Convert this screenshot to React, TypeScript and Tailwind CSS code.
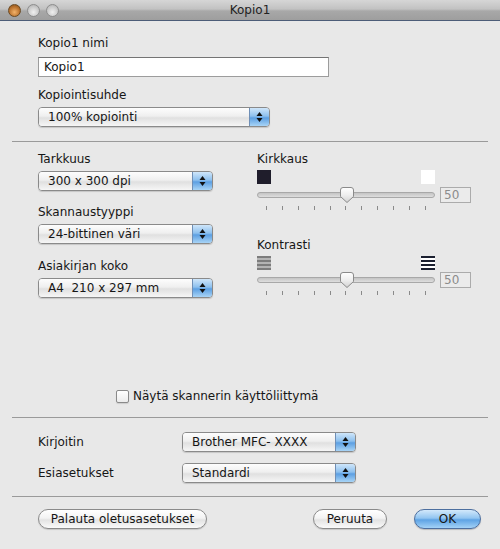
import type { ReactNode } from 'react';

const font = { fontFamily: '"DejaVu Sans", "Liberation Sans", sans-serif' };

function TrafficLight({ active }: { active?: boolean }) {
    return (
        <span
            className={
                active
                    ? 'h-[13px] w-[13px] rounded-full border border-[#6b4a22] bg-[radial-gradient(circle_at_50%_65%,#f3b36a,#b8702c_60%,#7a4a1c)]'
                    : 'h-[13px] w-[13px] rounded-full border border-[#8d8d8d] bg-[radial-gradient(circle_at_50%_65%,#f0f0f0,#c8c8c8_60%,#a9a9a9)]'
            }
        />
    );
}

function Label({ children, className = '' }: { children: ReactNode; className?: string }) {
    return <div className={`h-[16px] leading-[16px] ${className}`}>{children}</div>;
}

function Stepper() {
    return (
        <svg width="7" height="12" viewBox="0 0 7 12">
            <path d="M3.5 1 L6.5 5 L0.5 5 Z" fill="#111" />
            <path d="M0.5 7 L6.5 7 L3.5 11 Z" fill="#111" />
        </svg>
    );
}

function PopUp({ value, width, className = '' }: { value: string; width: string; className?: string }) {
    return (
        <div
            className={`flex h-[20px] overflow-hidden rounded-[4px] border border-[#8a8a8a] shadow-[0_1px_1px_rgba(0,0,0,0.15)] ${width} ${className}`}
        >
            <div className="flex flex-1 items-center whitespace-pre bg-[linear-gradient(#fdfdfd,#efefef_45%,#e0e0e0_55%,#f6f6f6)] pl-[9px] leading-none">
                {value}
            </div>
            <div className="flex w-[20px] items-center justify-center border-l border-[#6f8fb6] bg-[linear-gradient(#cfe6fa,#8dc0ee_45%,#5c9fe2_55%,#a8d4f6)]">
                <Stepper />
            </div>
        </div>
    );
}

function Ticks() {
    return (
        <div className="mt-[3px] flex h-[4px] w-[178px] justify-between px-[9px]">
            {Array.from({ length: 11 }).map((_, i) => (
                <span key={i} className="h-[4px] w-[1px] bg-[#8a8a8a]" />
            ))}
        </div>
    );
}

function Thumb() {
    return (
        <svg width="16" height="18" viewBox="0 0 16 18">
            <defs>
                <linearGradient id="thumb" x1="0" y1="0" x2="0" y2="1">
                    <stop offset="0" stopColor="#ffffff" />
                    <stop offset="0.5" stopColor="#eeeeee" />
                    <stop offset="1" stopColor="#d2d2d2" />
                </linearGradient>
            </defs>
            <path
                d="M1.5 4 Q1.5 1.5 4 1.5 H12 Q14.5 1.5 14.5 4 V10.5 L8 16.5 L1.5 10.5 Z"
                fill="url(#thumb)"
                stroke="#8a8a8a"
            />
        </svg>
    );
}

function Slider({ className = '' }: { className?: string }) {
    return (
        <div className={`flex h-[16px] items-center ${className}`}>
            <div className="relative h-[6px] w-[178px] rounded-full border border-[#a8a8a8] bg-[linear-gradient(#c4c4c4,#dedede)]">
                <div className="absolute left-[81px] top-[-7px]">
                    <Thumb />
                </div>
            </div>
            <div className="ml-[5px] flex h-[16px] w-[31px] items-center border border-[#ababab] bg-[#ebebeb] pl-[3px] text-[#8c8c8c] leading-none">
                50
            </div>
        </div>
    );
}

function Divider({ className = '' }: { className?: string }) {
    return <div className={`mx-[12px] h-[1px] bg-[#9a9a9a] ${className}`} />;
}

function Button({ children, width, primary }: { children: ReactNode; width: string; primary?: boolean }) {
    return (
        <button
            className={
                primary
                    ? `flex h-[20px] ${width} items-center justify-center rounded-full border border-[#4d6f9f] bg-[linear-gradient(#d3e9fb,#92c5f1_45%,#5ea3e4_55%,#a3d2f7)] leading-none shadow-[0_1px_1px_rgba(0,0,0,0.2)]`
                    : `flex h-[20px] ${width} items-center justify-center rounded-full border border-[#8a8a8a] bg-[linear-gradient(#ffffff,#f3f3f3_45%,#e3e3e3_55%,#fafafa)] leading-none shadow-[0_1px_1px_rgba(0,0,0,0.15)]`
            }
        >
            {children}
        </button>
    );
}

function BlackSquare() {
    return <span className="h-[14px] w-[14px] bg-[#1f1d2b]" />;
}

function WhiteSquare() {
    return <span className="h-[14px] w-[14px] bg-white" />;
}

function LowContrastIcon() {
    return (
        <svg width="14" height="14" viewBox="0 0 14 14">
            <rect width="14" height="14" fill="#b4b4b4" />
            <rect y="0" width="14" height="2" fill="#7c7c7c" />
            <rect y="4" width="14" height="2" fill="#7c7c7c" />
            <rect y="8" width="14" height="2" fill="#7c7c7c" />
            <rect y="12" width="14" height="2" fill="#7c7c7c" />
        </svg>
    );
}

function HighContrastIcon() {
    return (
        <svg width="14" height="14" viewBox="0 0 14 14">
            <rect width="14" height="14" fill="#ffffff" />
            <rect y="0" width="14" height="2" fill="#1b2030" />
            <rect y="4" width="14" height="2" fill="#1b2030" />
            <rect y="8" width="14" height="2" fill="#1b2030" />
            <rect y="12" width="14" height="2" fill="#1b2030" />
        </svg>
    );
}

export default function App() {
    return (
        <div
            className="flex h-[549px] w-[500px] flex-col bg-[#e8e8e8] text-[12px] text-[#161616]"
            style={font}
        >
            <div className="grid h-[21px] grid-cols-[1fr_auto_1fr] items-center border-b border-[#4d5d78] bg-[linear-gradient(#d6d6d6,#c2c2c2_45%,#a8a8a8_55%,#9e9e9e)]">
                <div className="flex items-center gap-[6px] pl-[8px]">
                    <TrafficLight active />
                    <TrafficLight />
                    <TrafficLight />
                </div>
                <div className="leading-none text-[#222]">Kopio1</div>
                <div />
            </div>

            <div className="flex flex-col px-[38px]">
                <Label className="mt-[14px]">Kopio1 nimi</Label>
                <div className="mt-[6px] flex h-[20px] w-[291px] items-center border border-[#9c9c9c] border-t-[#747474] bg-white pl-[5px] leading-none">
                    Kopio1
                </div>
                <Label className="mt-[10px]">Kopiointisuhde</Label>
                <PopUp className="mt-[4px]" width="w-[232px]" value="100% kopiointi" />
            </div>

            <Divider className="mt-[14px]" />

            <div className="flex pl-[38px]">
                <div className="flex w-[175px] flex-col">
                    <Label className="mt-[9px]">Tarkkuus</Label>
                    <PopUp className="mt-[4px]" width="w-[175px]" value="300 x 300 dpi" />
                    <Label className="mt-[13px]">Skannaustyyppi</Label>
                    <PopUp className="mt-[4px]" width="w-[175px]" value="24-bittinen väri" />
                    <Label className="mt-[14px]">Asiakirjan koko</Label>
                    <PopUp className="mt-[4px]" width="w-[175px]" value="A4  210 x 297 mm" />
                </div>

                <div className="ml-[44px] flex flex-col">
                    <Label className="mt-[9px]">Kirkkaus</Label>
                    <div className="mt-[3px] flex w-[178px] justify-between">
                        <BlackSquare />
                        <WhiteSquare />
                    </div>
                    <Slider className="mt-[3px]" />
                    <Ticks />
                    <Label className="mt-[27px]">Kontrasti</Label>
                    <div className="mt-[3px] flex w-[178px] justify-between">
                        <LowContrastIcon />
                        <HighContrastIcon />
                    </div>
                    <Slider className="mt-[2px]" />
                    <Ticks />
                </div>
            </div>

            <div className="mt-[90px] flex h-[16px] items-center pl-[116px]">
                <span className="h-[13px] w-[13px] rounded-[2px] border border-[#8a8a8a] bg-[linear-gradient(#ffffff,#ececec)] shadow-[0_1px_1px_rgba(0,0,0,0.12)]" />
                <span className="ml-[4px] leading-none">Näytä skannerin käyttöliittymä</span>
            </div>

            <Divider className="mt-[13px]" />

            <div className="mt-[14px] flex items-center pl-[38px]">
                <span className="w-[144px] leading-none">Kirjoitin</span>
                <PopUp width="w-[174px]" value="Brother MFC- XXXX" />
            </div>
            <div className="mt-[11px] flex items-center pl-[38px]">
                <span className="w-[144px] leading-none">Esiasetukset</span>
                <PopUp width="w-[174px]" value="Standardi" />
            </div>

            <Divider className="mt-[13px]" />

            <div className="mt-[12px] flex items-center pl-[38px] pr-[19px]">
                <Button width="w-[169px]">Palauta oletusasetukset</Button>
                <div className="flex-1" />
                <Button width="w-[74px]">Peruuta</Button>
                <div className="w-[27px]" />
                <Button width="w-[67px]" primary>
                    OK
                </Button>
            </div>
        </div>
    );
}
